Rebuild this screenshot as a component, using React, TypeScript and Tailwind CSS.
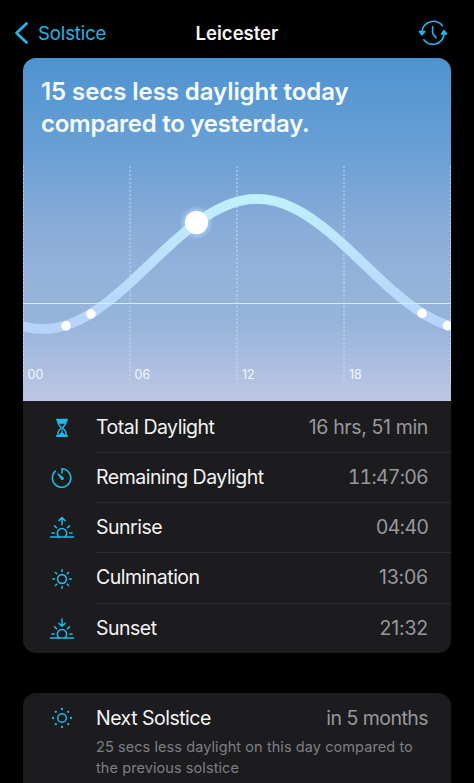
import type { ReactNode } from "react";

const CYAN = "#22b8e8";

function HistoryIcon() {
  return (
    <svg width="30" height="26" viewBox="0 0 30 26" fill="none" stroke={CYAN} strokeWidth="1.6" strokeLinecap="round" strokeLinejoin="round">
      <path d="M4.1 10.6A11.4 11.4 0 0 1 24.2 5.6" />
      <path d="M26 15A11.4 11.4 0 0 1 5.8 19.8" />
      <path d="M1.2 11.3h5.6L4 15z" fill={CYAN} strokeWidth="1.3" />
      <path d="M23.2 14.100h5.600L26 10.400z" fill={CYAN} strokeWidth="1.3" />
      <path d="M14.600 6.600v6.600l3.400 4.600" />
    </svg>
  );
}

function Hourglass() {
  return (
    <svg width="24" height="24" viewBox="0 0 24 24" fill="none" stroke={CYAN} strokeWidth="1.4" strokeLinecap="round" strokeLinejoin="round">
      <path d="M7 3.700h10M7 20h10" strokeWidth="2" />
      <path d="M7.700 4c0 4 .9 5.200 3.200 7.100v1.400C8.600 14.400 7.700 15.500 7.700 19.500M16.300 4c0 4-.9 5.200-3.200 7.100v1.400c2.300 1.900 3.200 3 3.200 7" />
      <path d="M7.700 4h8.600c0 1.800-.2 2.900-.8 3.800h-7c-.6-.9-.8-2-.8-3.800zM8.200 19.500l3.800-3.600 3.800 3.600z" fill={CYAN} strokeWidth=".5" />
      <path d="M12 11v5" strokeWidth="1" />
    </svg>
  );
}

function Timer() {
  return (
    <svg width="24" height="24" viewBox="0 0 24 24" fill="none" stroke={CYAN} strokeWidth="1.600" strokeLinecap="round" strokeLinejoin="round">
      <path d="M5.400 5.200A9.200 9.200 0 1 0 12 2.800V7" />
      <path d="M8 8l5.100 3.700a1.100 1.100 0 0 1-1.500 1.500z" fill={CYAN} strokeWidth="1.200" />
    </svg>
  );
}

function Horizon({ down = false }: { down?: boolean }) {
  return (
    <svg width="26" height="24" viewBox="0 0 26 24" fill="none" stroke={CYAN} strokeWidth="1.500" strokeLinecap="round" strokeLinejoin="round">
      <path d="M1.500 21h23" />
      <path d="M9.900 20.700a4.700 4.700 0 1 1 6.200 0" />
      <path d="M2.900 16.900h2.300M20.800 16.900h2.300M5.600 9.900l1.900 1.900M20.400 9.900l-1.900 1.900" />
      {down ? <path d="M13 2v7M9.900 6.200 13 9.200l3.100-3" /> : <path d="M13 8.700v-7M9.900 4.600 13 1.600l3.100 3" />}
    </svg>
  );
}

function Sun() {
  return (
    <svg width="24" height="24" viewBox="0 0 24 24" fill="none" stroke={CYAN} strokeWidth="1.600" strokeLinecap="round">
      <circle cx="12" cy="12" r="4.400" />
      <path d="M12 2.800v1.700M12 19.500v1.700M2.800 12h1.700M19.500 12h1.700M5.500 5.500l1.200 1.200M17.300 17.300l1.200 1.200M5.500 18.500l1.200-1.200M17.300 6.700l1.200-1.200" />
    </svg>
  );
}

function DottedSun() {
  const dots = [[12, 3], [12, 21], [3, 12], [21, 12], [5.8, 5.8], [18.2, 18.2], [5.8, 18.2], [18.2, 5.8]];
  return (
    <svg width="24" height="24" viewBox="0 0 24 24" fill="none">
      <circle cx="12" cy="12" r="4.300" stroke={CYAN} strokeWidth="1.500" />
      {dots.map(([x, y]) => <circle key={`${x}-${y}`} cx={x} cy={y} r="1.150" fill={CYAN} />)}
    </svg>
  );
}

const curveY = (x: number) => 206 - 65 * Math.cos(((x - 234) / 428) * Math.PI * 2);
const curve = Array.from({ length: 221 }, (_, i) => {
  const x = -6 + i * 2;
  return `${i ? "L" : "M"}${x} ${curveY(x).toFixed(2)}`;
}).join("");

function SunChart() {
  return (
    <svg className="block" width="428" height="343" viewBox="0 0 428 343">
      <defs>
        <linearGradient id="sky" x1="0" y1="0" x2="0" y2="1">
          <stop offset="0" stopColor="#4e93d1" />
          <stop offset=".27" stopColor="#6aa0d5" />
          <stop offset=".5" stopColor="#8aacd8" />
          <stop offset=".64" stopColor="#95b2db" />
          <stop offset=".76" stopColor="#95b3db" />
          <stop offset="1" stopColor="#bec7e4" />
        </linearGradient>
        <linearGradient id="path" gradientUnits="userSpaceOnUse" x1="0" y1="138" x2="0" y2="275">
          <stop offset="0" stopColor="#bff1fc" />
          <stop offset=".5" stopColor="#bcdffb" />
          <stop offset="1" stopColor="#b6d2fa" />
        </linearGradient>
        <radialGradient id="glow">
          <stop offset=".55" stopColor="#d9f4ff" stopOpacity=".6" />
          <stop offset="1" stopColor="#bfe8ff" stopOpacity="0" />
        </radialGradient>
      </defs>
      <rect width="428" height="343" fill="url(#sky)" />
      <path d="M.5 108v217M107 108v217M214 108v217M321 108v217M427.500 108v217" stroke="#d3e6f6" strokeOpacity=".65" strokeWidth="1.200" strokeDasharray="2.200 1.800" />
      <path d={curve} fill="none" stroke="url(#path)" strokeWidth="9.800" />
      <path d="M0 245.500h428" stroke="#d2eff9" strokeWidth="1.100" />
      {[43, 68, 399, 424.500].map((x) => <circle key={x} cx={x} cy={curveY(x) + 0.5} r="4.800" fill="#fff" />)}
      <circle cx="173.500" cy="164.500" r="17" fill="url(#glow)" />
      <circle cx="173.500" cy="164.500" r="11.500" fill="#fff" />
      <g fill="#f3f7fc" fontSize="12.500" fontFamily="Inter, sans-serif">
        <text x="4.500" y="321">00</text>
        <text x="111.500" y="321">06</text>
        <text x="219" y="321">12</text>
        <text x="326" y="321">18</text>
      </g>
    </svg>
  );
}

function Row({ icon, label, value, last = false, spacing = "tracking-[-0.2px]" }: { icon: ReactNode; label: ReactNode; value: string; last?: boolean; spacing?: string }) {
  return (
    <div className="flex h-[50.3px]">
      <div className="flex w-[73px] shrink-0 items-center justify-center pl-[4px]">{icon}</div>
      <div className={`flex flex-1 items-center justify-between pr-[23px] text-[19.500px] ${last ? "" : "border-b border-[#2b2b2d]"}`}>
        <span className="tracking-[-0.5px] text-[#f3f3f4]">{label}</span>
        <span className={`text-[#98989c] ${spacing}`}>{value}</span>
      </div>
    </div>
  );
}

export default function App() {
  return (
    <div className="flex h-[783px] w-[474px] flex-col overflow-hidden bg-black font-[Inter,sans-serif] whitespace-nowrap">
      <header className="grid h-[58px] shrink-0 grid-cols-3 items-center pt-[8px] pr-[26px] pl-[14px] text-[18.500px] leading-6">
        <div className="flex items-center gap-[9px] tracking-[-0.1px] text-[#27b5e9]">
          <svg width="15" height="22" viewBox="0 0 15 22" fill="none" stroke={CYAN} strokeWidth="2.600" strokeLinecap="round" strokeLinejoin="round">
            <path d="M12.500 1.500 2.500 11l10 9.500" />
          </svg>
          <span>Solstice</span>
        </div>
        <h1 className="pl-[12px] text-center font-semibold text-[#f7f7f7]">Leicester</h1>
        <div className="flex justify-end"><HistoryIcon /></div>
      </header>

      <main className="flex flex-col gap-[40px] px-[23px]">
        <section className="h-[595px] shrink-0 overflow-hidden rounded-[13px] bg-[#1c1c1e]">
          <div className="grid">
            <div className="col-start-1 row-start-1"><SunChart /></div>
            <h2 className="z-10 col-start-1 row-start-1 pt-[18px] pl-[18px] text-[24px] leading-[32px] font-semibold text-[#f5fcff]">
              <span className="tracking-[-0.07px]">15 secs less daylight today</span><br />
              <span className="tracking-[-0.25px]">compared to yesterday.</span>
            </h2>
          </div>
          <div className="pt-[1.500px]">
            <Row icon={<Hourglass />} label="Total Daylight" value="16 hrs, 51 min" spacing="tracking-[-0.37px]" />
            <Row icon={<Timer />} label="Remaining Daylight" value="11:47:06" spacing="tabular-nums tracking-[-0.75px]" />
            <Row icon={<Horizon />} label="Sunrise" value="04:40" spacing="tracking-[-0.7px]" />
            <Row icon={<Sun />} label="Culmination" value="13:06" />
            <Row icon={<Horizon down />} label="Sunset" value="21:32" last />
          </div>
        </section>

        <section className="h-[110px] shrink-0 rounded-t-[13px] bg-[#1c1c1e]">
          <Row icon={<DottedSun />} label="Next Solstice" value="in 5 months" last spacing="tracking-[-0.53px]" />
          <p className="-mt-[6px] pl-[73px] text-[14.500px] leading-[20.500px] tracking-[0.080px] text-[#7f7f83]">
            25 secs less daylight on this day compared to<br />the previous solstice
          </p>
        </section>
      </main>
    </div>
  );
}
